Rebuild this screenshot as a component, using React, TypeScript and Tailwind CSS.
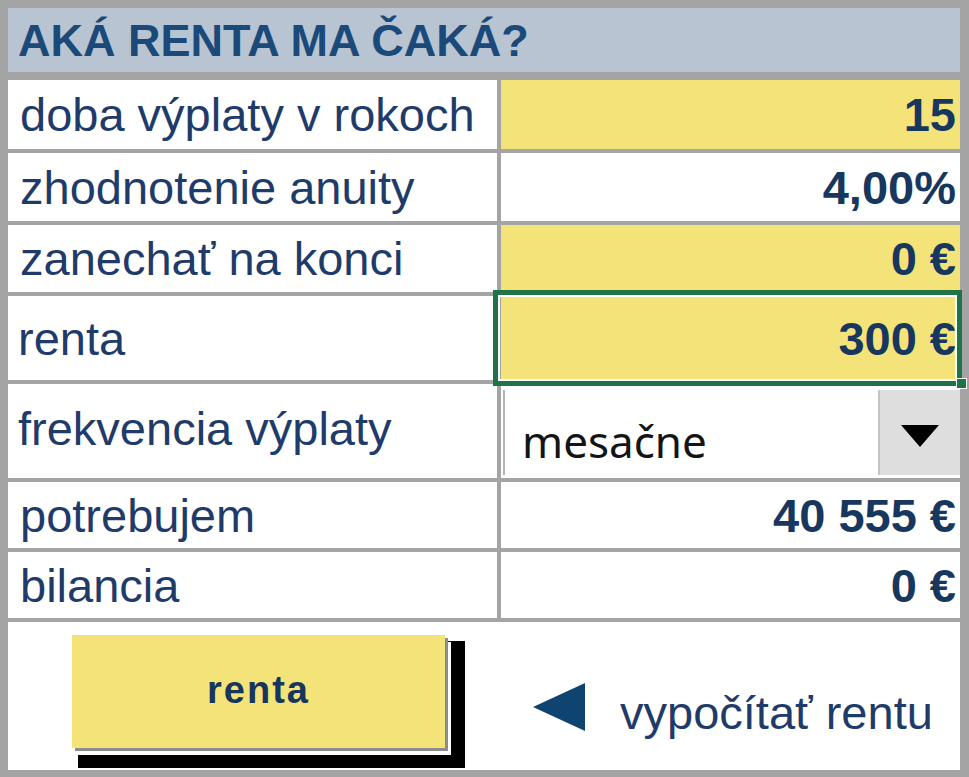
const labelCls = "text-[47px] leading-none text-[#1f3b6a] whitespace-nowrap"
const valueCls = "text-[47px] font-bold leading-none text-[#17375e] whitespace-nowrap"

function Row({ h, label, value, yellow }: { h: string; label: string; value: string; yellow?: boolean }) {
  return (
    <div className={`grid grid-cols-[489px_459px] gap-x-[4px] ${h}`}>
      <div className="bg-white flex items-center pl-[12px]">
        <span className={labelCls}>{label}</span>
      </div>
      <div className={`${yellow ? "bg-[#f3e379]" : "bg-white"} flex items-center justify-end pr-[4px]`}>
        <span className={valueCls}>{value}</span>
      </div>
    </div>
  )
}

export default function App() {
  return (
    <div className="w-[969px] h-[777px] bg-[#a4a4a4] pt-[8px] pl-[8px] pr-[9px] pb-[7px] font-['Liberation_Sans',Arial,sans-serif] overflow-hidden">
      <div className="flex flex-col gap-[4px]">
        {/* header */}
        <div className="h-[64px] mb-[4px] bg-[#b8c4d1] flex items-center pl-[10px]">
          <span className="text-[45px] font-bold leading-none text-[#1b4a7a] whitespace-nowrap">AKÁ RENTA MA ČAKÁ?</span>
        </div>

        <Row h="h-[69px]" label="doba výplaty v rokoch" value="15" yellow />
        <Row h="h-[68px]" label="zhodnotenie anuity" value="4,00%" />
        <Row h="h-[67px]" label="zanechať na konci" value="0 €" yellow />

        {/* selected cell */}
        <div className="grid grid-cols-[489px_459px] gap-x-[4px] h-[84px]">
          <div className="bg-white flex items-center pl-[10px]">
            <span className={labelCls}>renta</span>
          </div>
          <div className="relative bg-[#f3e379] flex items-center justify-end pr-[4px]">
            <span className={valueCls}>300 €</span>
            <div className="absolute -left-[8px] -top-[6px] -right-[2px] -bottom-[6px] border-[5px] border-[#217346] shadow-[inset_0_0_0_2px_#ffffff]" />
            <div className="absolute -right-[7px] -bottom-[9px] w-[11px] h-[11px] bg-[#217346] border border-white" />
          </div>
        </div>

        {/* dropdown row */}
        <div className="grid grid-cols-[489px_459px] gap-x-[4px] h-[94px]">
          <div className="bg-white flex items-center pl-[10px] pb-[6px]">
            <span className={labelCls}>frekvencia výplaty</span>
          </div>
          <div className="bg-white flex pl-[2px] pt-[6px] pb-[3px]">
            <div className="flex-1 flex border-l-[2px] border-[#b4b4b4]">
              <div className="flex-1 flex items-end pl-[17px] pb-[12px]">
                <span className="font-['Noto_Sans',sans-serif] text-[44px] leading-none text-[#141414]">mesačne</span>
              </div>
              <div className="w-[82px] bg-[#dedede] border-l-[2px] border-[#c4c4c4] flex items-center justify-center pt-[6px]">
                <svg width="38" height="22" viewBox="0 0 38 22">
                  <polygon points="0,0 38,0 19,22" fill="#000000" />
                </svg>
              </div>
            </div>
          </div>
        </div>

        <Row h="h-[66px]" label="potrebujem" value="40 555 €" />
        <Row h="h-[66px]" label="bilancia" value="0 €" />

        {/* bottom area */}
        <div className="h-[148px] bg-white flex items-start pl-[64px] pt-[13px]">
          <div className="w-[373px] h-[113px] bg-[#f3e379] flex items-center justify-center shadow-[3px_3px_0_#8c8c8c,6px_7px_0_#ffffff,13px_13px_0_7px_#000000]">
            <span className="text-[38px] font-bold leading-none tracking-[2px] text-[#17365d] -mt-[4px]">renta</span>
          </div>
          <div className="ml-[88px] mt-[42px] flex items-center gap-[35px]">
            <svg width="52" height="48" viewBox="0 0 52 48">
              <polygon points="0,24 52,0 52,48" fill="#0f4470" />
            </svg>
            <span className={`${labelCls} pt-[12px]`}>vypočítať rentu</span>
          </div>
        </div>
      </div>
    </div>
  )
}
